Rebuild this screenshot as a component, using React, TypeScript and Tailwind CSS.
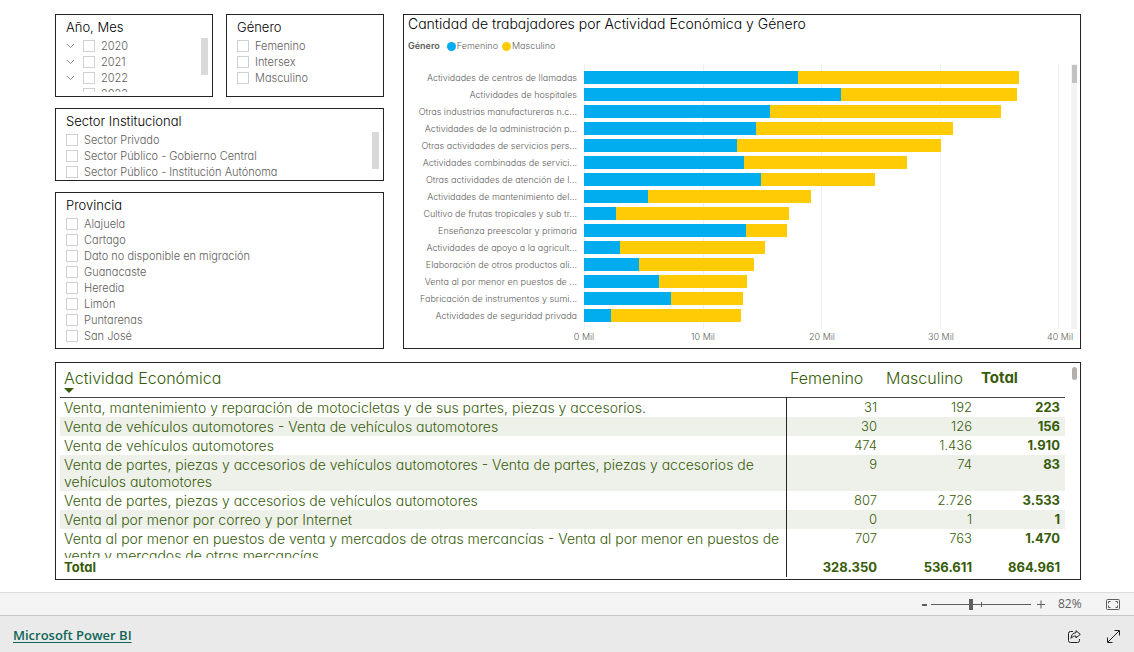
import React from "react";
import clsx from "clsx";

const years = ["2020", "2021", "2022", "2023"];
const genders = ["Femenino", "Intersex", "Masculino"];
const sectors = [
  "Sector Privado",
  "Sector Público - Gobierno Central",
  "Sector Público - Institución Autónoma",
];
const provinces = [
  "Alajuela",
  "Cartago",
  "Dato no disponible en migración",
  "Guanacaste",
  "Heredia",
  "Limón",
  "Puntarenas",
  "San José",
];

// female and total workers, in thousands
const bars = [
  { label: "Actividades de centros de llamadas", female: 18.05, total: 36.6 },
  { label: "Actividades de hospitales", female: 21.6, total: 36.45 },
  { label: "Otras industrias manufactureras n.c...", female: 15.65, total: 35.1 },
  { label: "Actividades de la administración p...", female: 14.5, total: 31.05 },
  { label: "Otras actividades de servicios pers...", female: 12.85, total: 30.1 },
  { label: "Actividades combinadas de servici...", female: 13.45, total: 27.2 },
  { label: "Otras actividades de atención de l...", female: 14.9, total: 24.5 },
  { label: "Actividades de mantenimiento del...", female: 5.35, total: 19.1 },
  { label: "Cultivo de frutas tropicales y sub tr...", female: 2.7, total: 17.25 },
  { label: "Enseñanza preescolar y primaria", female: 13.65, total: 17.1 },
  { label: "Actividades de apoyo a la agricult...", female: 3.05, total: 15.25 },
  { label: "Elaboración de otros productos ali...", female: 4.6, total: 14.3 },
  { label: "Venta al por menor en puestos de ...", female: 6.35, total: 13.75 },
  { label: "Fabricación de instrumentos y sumi...", female: 7.3, total: 13.35 },
  { label: "Actividades de seguridad privada", female: 2.3, total: 13.25 },
];
const axisMax = 40;
const ticks = ["0 Mil", "10 Mil", "20 Mil", "30 Mil", "40 Mil"];

const rows = [
  {
    name: "Venta, mantenimiento y reparación de motocicletas y de sus partes, piezas y accesorios.",
    values: ["31", "192", "223"],
  },
  {
    name: "Venta de vehículos automotores - Venta de vehículos automotores",
    values: ["30", "126", "156"],
  },
  { name: "Venta de vehículos automotores", values: ["474", "1.436", "1.910"] },
  {
    name: "Venta de partes, piezas y accesorios de vehículos automotores - Venta de partes, piezas y accesorios de vehículos automotores",
    values: ["9", "74", "83"],
  },
  {
    name: "Venta de partes, piezas y accesorios de vehículos automotores",
    values: ["807", "2.726", "3.533"],
  },
  { name: "Venta al por menor por correo y por Internet", values: ["0", "1", "1"] },
  {
    name: "Venta al por menor en puestos de venta y mercados de otras mercancías - Venta al por menor en puestos de venta y mercados de otras mercancías",
    values: ["707", "763", "1.470"],
  },
];

function Panel({
  title,
  className,
  children,
}: {
  title: string;
  className?: string;
  children: React.ReactNode;
}) {
  return (
    <section
      className={clsx(
        "overflow-hidden border border-[#252423] bg-white pl-[10px] pr-1 pt-[2px]",
        className
      )}
    >
      <h2 className="text-[13px] leading-[21px] text-black">{title}</h2>
      {children}
    </section>
  );
}

function Option({ label, expandable }: { label: string; expandable?: boolean }) {
  return (
    <li className="flex h-4 items-center">
      {expandable && (
        <button type="button" aria-label={"Expandir " + label} className="mr-2 w-[9px]">
          <svg viewBox="0 0 9 6" className="h-[6px] w-[9px]" fill="none" stroke="#8a8886">
            <path d="M1 1l3.5 3.5L8 1" />
          </svg>
        </button>
      )}
      <label className="flex items-center gap-[6px] text-[11px] leading-4 text-[#605e5c]">
        <input
          type="checkbox"
          className="size-3 appearance-none border border-[#d2d0ce] bg-white checked:bg-[#605e5c]"
        />
        {label}
      </label>
    </li>
  );
}

function Chart() {
  return (
    <section className="flex min-w-0 flex-1 flex-col border border-[#252423] bg-white pl-1 pr-[3px]">
      <h2 className="text-[14px] leading-[17px] text-black">
        Cantidad de trabajadores por Actividad Económica y Género
      </h2>
      <div className="mt-[6px] flex h-4 items-center text-[9px] text-[#605e5c]">
        <span className="mr-[7px] font-semibold">Género</span>
        <span className="mr-1 flex items-center gap-px">
          <i className="size-[9px] rounded-full bg-[#01adef]" />
          Femenino
        </span>
        <span className="flex items-center gap-px">
          <i className="size-[9px] rounded-full bg-[#ffcb05]" />
          Masculino
        </span>
      </div>
      <div className="mt-[10px] flex">
        <ul className="w-[169px] shrink-0 pt-[5px] text-right text-[9px] text-[#605e5c]">
          {bars.map((bar) => (
            <li key={bar.label} className="h-[17px] whitespace-nowrap leading-[17px]">
              {bar.label}
            </li>
          ))}
        </ul>
        <div className="ml-[7px] grid h-[265px] min-w-0 flex-1">
          <div className="col-start-1 row-start-1 grid grid-cols-4 border-l border-[#f0f0f0]">
            <div className="border-r border-[#f0f0f0]" />
            <div className="border-r border-[#f0f0f0]" />
            <div className="border-r border-[#f0f0f0]" />
            <div className="border-r border-[#f0f0f0]" />
          </div>
          <div className="col-start-1 row-start-1 flex flex-col gap-1 pt-[7px]">
            {bars.map((bar) => (
              <div key={bar.label} className="flex h-[13px]">
                <div
                  className="bg-[#01adef]"
                  style={{ width: (bar.female / axisMax) * 100 + "%" }}
                />
                <div
                  className="bg-[#ffcb05]"
                  style={{ width: ((bar.total - bar.female) / axisMax) * 100 + "%" }}
                />
              </div>
            ))}
          </div>
        </div>
        <div className="ml-3 w-[6px] bg-[#f3f3f3] pl-px pt-px">
          <div className="h-[18px] bg-[#c2c2c2]" />
        </div>
      </div>
      <div className="-mr-[3px] ml-[156px] mt-[1px] flex justify-between text-[9px] leading-[14px] text-[#605e5c]">
        {ticks.map((tick) => (
          <span key={tick} className="w-10 text-center">
            {tick}
          </span>
        ))}
      </div>
    </section>
  );
}

function ActivityTable() {
  return (
    <section className="flex items-start border border-[#252423] bg-white pb-[2px] pl-1 pr-[3px]">
      <table className="flex-1 table-fixed border-collapse text-[13px] leading-[17px] text-[#375c0a]">
        <colgroup>
          <col />
          <col className="w-24" />
          <col className="w-[95px]" />
          <col className="w-[88px]" />
        </colgroup>
        <thead>
          <tr className="h-[34px] border-b border-[#484644] text-left align-top text-[16px] leading-[18px]">
            <th className="pl-1 pt-[6px] font-light">
              Actividad Económica
              <svg viewBox="0 0 10 5" className="mt-px h-[5px] w-[10px]" fill="#375c0a">
                <path d="M0 0h10L5 5z" />
              </svg>
            </th>
            <th className="pl-1 pt-[6px] font-light">Femenino</th>
            <th className="pl-1 pt-[6px] font-light">Masculino</th>
            <th className="pl-1 pt-[6px] text-[15px] font-bold">Total</th>
          </tr>
        </thead>
        <tbody>
          {rows.map((row, i) => (
            <tr key={row.name} className={clsx("align-top", i % 2 === 1 && "bg-[#eef1ea]")}>
              <td className="border-r border-[#252423] pl-1 text-[14px] leading-[17px]">
                <div
                  className={clsx(
                    "pt-px",
                    i === rows.length - 1 ? "h-[29px] overflow-hidden" : "pb-px"
                  )}
                >
                  {row.name}
                </div>
              </td>
              {row.values.map((value, n) => (
                <td
                  key={n}
                  className={clsx("pr-[5px] pt-px text-right", n === 2 && "font-bold")}
                >
                  {value}
                </td>
              ))}
            </tr>
          ))}
        </tbody>
        <tfoot>
          <tr className="h-[19px] text-right font-bold">
            <td className="border-r border-[#252423] pl-1 text-left">Total</td>
            <td className="pr-[5px]">328.350</td>
            <td className="pr-[5px]">536.611</td>
            <td className="pr-[5px]">864.961</td>
          </tr>
        </tfoot>
      </table>
      <div className="ml-[7px] mt-1 h-[13px] w-[5px] rounded-full bg-[#b3b0ad]" />
    </section>
  );
}

function ZoomBar() {
  return (
    <div className="flex h-[23px] items-center justify-end border-t border-[#dcdcdc] bg-[#f4f4f4] pr-[14px] text-[#605e5c]">
      <button type="button" aria-label="Alejar" className="mr-1 h-4 w-[5px]">
        <svg viewBox="0 0 5 16" className="h-4 w-[5px]" fill="#605e5c">
          <path d="M0 8h5v2H0z" />
        </svg>
      </button>
      <div className="relative flex h-3 w-[100px] items-center">
        <input
          type="range"
          aria-label="Zoom"
          defaultValue={40}
          className="w-full appearance-none bg-transparent [&::-webkit-slider-runnable-track]:h-px [&::-webkit-slider-runnable-track]:bg-[#605e5c] [&::-webkit-slider-thumb]:-mt-[5px] [&::-webkit-slider-thumb]:h-[11px] [&::-webkit-slider-thumb]:w-1 [&::-webkit-slider-thumb]:appearance-none [&::-webkit-slider-thumb]:bg-[#605e5c]"
        />
        <span className="absolute left-1/2 top-1 h-[5px] w-px bg-[#605e5c]" />
      </div>
      <button type="button" aria-label="Acercar" className="ml-[6px] h-4 w-2">
        <svg viewBox="0 0 8 16" className="h-4 w-2" stroke="#605e5c">
          <path d="M0 8.500h8M4 4.500v8" />
        </svg>
      </button>
      <span className="ml-[13px] w-7 font-['Open_Sans',sans-serif] text-[12px] font-normal">
        82%
      </span>
      <button type="button" aria-label="Ajustar a la página" className="ml-5 h-[11px] w-[14px]">
        <svg viewBox="0 0 14 11" className="h-[11px] w-[14px]" fill="none" stroke="#605e5c">
          <rect x=".5" y=".5" width="13" height="10" rx="1" />
          <path d="M2.500 4.500v-2h2M9.500 2.500h2v2M11.500 6.500v2h-2M4.500 8.500h-2v-2" />
        </svg>
      </button>
    </div>
  );
}

function Footer() {
  return (
    <footer className="flex h-[37px] items-center border-t border-[#c8c8c8] bg-[#eaeaea] pl-[13px] pr-[14px] pt-1">
      <a
        href="#"
        className="font-['Open_Sans',sans-serif] text-[13px] font-semibold text-[#0f6558] underline underline-offset-2"
      >
        Microsoft Power BI
      </a>
      <button type="button" aria-label="Compartir" className="ml-auto h-[13px] w-[13px]">
        <svg viewBox="0 0 13 13" className="size-[13px]" fill="none" stroke="#201f1e">
          <path d="M5 1.500H2.500a2 2 0 0 0-2 2v7a2 2 0 0 0 2 2h7a2 2 0 0 0 2-2V9" />
          <path d="M8 .7l4.300 3.600L8 7.900V6C6 6 4.500 6.500 3 8.300 3.200 5 5 2.900 8 2.700z" />
        </svg>
      </button>
      <button type="button" aria-label="Pantalla completa" className="ml-[26px] h-[13px] w-[13px]">
        <svg viewBox="0 0 13 13" className="size-[13px]" fill="none" stroke="#201f1e">
          <path d="M1 12L12 1M7.500.500h5v5M.500 7.500v5h5" />
        </svg>
      </button>
    </footer>
  );
}

export default function App() {
  return (
    <div className="flex min-h-screen flex-col bg-white font-['Inter',sans-serif] font-light [font-feature-settings:'cv11']">
      <main className="flex flex-1 flex-col gap-[13px] pb-3 pl-[55px] pr-[53px] pt-[14px]">
        <div className="flex gap-[19px]">
          <div className="flex w-[329px] shrink-0 flex-col gap-[11px]">
            <div className="flex gap-[13px]">
              <Panel title="Año, Mes" className="h-[83px] flex-1">
                <div className="flex justify-between">
                  <ul className="h-[54px] overflow-hidden">
                    {years.map((year) => (
                      <Option key={year} label={year} expandable />
                    ))}
                  </ul>
                  <div className="h-[37px] w-[7px] bg-[#d9d9d9]" />
                </div>
              </Panel>
              <Panel title="Género" className="h-[83px] flex-1">
                <ul>
                  {genders.map((gender) => (
                    <Option key={gender} label={gender} />
                  ))}
                </ul>
              </Panel>
            </div>
            <Panel title="Sector Institucional" className="h-[73px]">
              <div className="flex justify-between">
                <ul>
                  {sectors.map((sector) => (
                    <Option key={sector} label={sector} />
                  ))}
                </ul>
                <div className="h-[37px] w-[7px] bg-[#d9d9d9]" />
              </div>
            </Panel>
            <Panel title="Provincia" className="h-[157px]">
              <ul className="flex h-[126px] flex-col">
                {provinces.map((province) => (
                  <Option key={province} label={province} />
                ))}
              </ul>
            </Panel>
          </div>
          <Chart />
        </div>
        <ActivityTable />
      </main>
      <ZoomBar />
      <Footer />
    </div>
  );
}
